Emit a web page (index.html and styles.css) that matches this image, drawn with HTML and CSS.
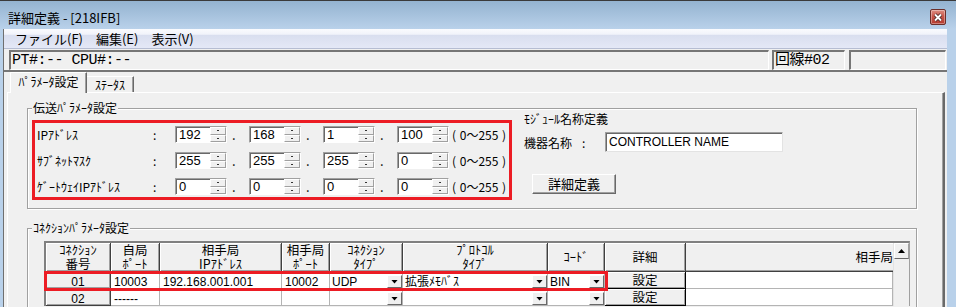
FILE: index.html
```html
<!DOCTYPE html>
<html lang="ja">

<head>
    <meta charset="UTF-8">
    <title>詳細定義 - [218IFB]</title>
    <link rel="stylesheet" href="styles.css">
</head>

<body>
    <div class="titlebar">
        <span class="title">詳細定義 - [218IFB]</span>
        <span class="close-btn">
            <svg width="10" height="9" viewBox="0 0 10 9">
                <path d="M2 1.5 L8 7.5 M8 1.5 L2 7.5" stroke="#4a2a28" stroke-width="3.6" />
                <path d="M2 1.5 L8 7.5 M8 1.5 L2 7.5" stroke="#fff" stroke-width="1.8" />
            </svg>
        </span>
    </div>
    <div class="frame">
        <div class="client">
            <div class="menubar">
                <span class="menu-item">ファイル(F)</span>
                <span class="menu-item">編集(E)</span>
                <span class="menu-item">表示(V)</span>
            </div>
            <div class="status-row">
                <div class="status-panel status-main">PT#:-- CPU#:--</div>
                <div class="status-panel status-line">回線#02</div>
                <div class="status-panel status-empty"></div>
            </div>
            <div class="tab-area">
                <div class="tabs">
                    <div class="tab tab-active">ﾊﾟﾗﾒｰﾀ設定</div>
                    <div class="tab tab-status">ｽﾃｰﾀｽ</div>
                </div>
                <div class="tab-panel">
                    <!-- 伝送パラメータ -->
                    <div class="group group-transfer">
                        <div class="legend">伝送ﾊﾟﾗﾒｰﾀ設定</div>
                        <div class="transfer-body">
                            <div class="ip-box">
                                <div class="ip-row">
                                    <span class="ip-label">IPｱﾄﾞﾚｽ</span>
                                    <span class="ip-colon">:</span>
                                    <div class="spin"><span class="spin-value">192</span><span class="spin-btns"><i></i><i></i></span></div>
                                    <span class="ip-dot">.</span>
                                    <div class="spin"><span class="spin-value">168</span><span class="spin-btns"><i></i><i></i></span></div>
                                    <span class="ip-dot">.</span>
                                    <div class="spin"><span class="spin-value">1</span><span class="spin-btns"><i></i><i></i></span></div>
                                    <span class="ip-dot">.</span>
                                    <div class="spin"><span class="spin-value">100</span><span class="spin-btns"><i></i><i></i></span></div>
                                    <span class="ip-range">( 0～255 )</span>
                                </div>
                                <div class="ip-row">
                                    <span class="ip-label">ｻﾌﾞﾈｯﾄﾏｽｸ</span>
                                    <span class="ip-colon">:</span>
                                    <div class="spin"><span class="spin-value">255</span><span class="spin-btns"><i></i><i></i></span></div>
                                    <span class="ip-dot">.</span>
                                    <div class="spin"><span class="spin-value">255</span><span class="spin-btns"><i></i><i></i></span></div>
                                    <span class="ip-dot">.</span>
                                    <div class="spin"><span class="spin-value">255</span><span class="spin-btns"><i></i><i></i></span></div>
                                    <span class="ip-dot">.</span>
                                    <div class="spin"><span class="spin-value">0</span><span class="spin-btns"><i></i><i></i></span></div>
                                    <span class="ip-range">( 0～255 )</span>
                                </div>
                                <div class="ip-row">
                                    <span class="ip-label">ｹﾞｰﾄｳｪｲIPｱﾄﾞﾚｽ</span>
                                    <span class="ip-colon">:</span>
                                    <div class="spin"><span class="spin-value">0</span><span class="spin-btns"><i></i><i></i></span></div>
                                    <span class="ip-dot">.</span>
                                    <div class="spin"><span class="spin-value">0</span><span class="spin-btns"><i></i><i></i></span></div>
                                    <span class="ip-dot">.</span>
                                    <div class="spin"><span class="spin-value">0</span><span class="spin-btns"><i></i><i></i></span></div>
                                    <span class="ip-dot">.</span>
                                    <div class="spin"><span class="spin-value">0</span><span class="spin-btns"><i></i><i></i></span></div>
                                    <span class="ip-range">( 0～255 )</span>
                                </div>
                            </div>
                            <div class="module">
                                <div class="module-title">ﾓｼﾞｭｰﾙ名称定義</div>
                                <div class="name-row">
                                    <span class="name-label">機器名称<span class="name-colon">:</span></span>
                                    <div class="name-input">CONTROLLER NAME</div>
                                </div>
                                <div class="detail-btn">詳細定義</div>
                            </div>
                        </div>
                    </div>

                    <!-- コネクションパラメータ -->
                    <div class="group group-conn">
                        <div class="legend">ｺﾈｸｼｮﾝﾊﾟﾗﾒｰﾀ設定</div>
                        <div class="conn-table">
                            <div class="grid">
                                <div class="hd">ｺﾈｸｼｮﾝ<br>番号</div>
                                <div class="hd">自局<br>ﾎﾟｰﾄ</div>
                                <div class="hd">相手局<br>IPｱﾄﾞﾚｽ</div>
                                <div class="hd">相手局<br>ﾎﾟｰﾄ</div>
                                <div class="hd">ｺﾈｸｼｮﾝ<br>ﾀｲﾌﾟ</div>
                                <div class="hd">ﾌﾟﾛﾄｺﾙ<br>ﾀｲﾌﾟ</div>
                                <div class="hd">ｺｰﾄﾞ</div>
                                <div class="hd">詳細</div>
                                <div class="hd hd-last">相手局</div>

                                <div class="rn">01</div>
                                <div class="td">10003</div>
                                <div class="td">192.168.001.001</div>
                                <div class="td">10002</div>
                                <div class="td combo"><span>UDP</span><span class="drop"></span></div>
                                <div class="td combo"><span>拡張ﾒﾓﾊﾞｽ</span><span class="drop"></span></div>
                                <div class="td combo"><span>BIN</span><span class="drop"></span></div>
                                <div class="dt">設定</div>
                                <div class="td"></div>

                                <div class="rn">02</div>
                                <div class="td">------</div>
                                <div class="td"></div>
                                <div class="td"></div>
                                <div class="td combo"><span></span><span class="drop"></span></div>
                                <div class="td combo"><span></span><span class="drop"></span></div>
                                <div class="td combo"><span></span><span class="drop"></span></div>
                                <div class="dt">設定</div>
                                <div class="td"></div>
                            </div>
                            <div class="scrollbar">
                                <div class="scroll-up"></div>
                            </div>
                            <div class="row-mark"></div>
                        </div>
                    </div>
                </div>
            </div>
        </div>
    </div>
</body>

</html>
```

FILE: styles.css
```css
* {
    margin: 0;
    padding: 0;
    box-sizing: border-box;
}

body {
    width: 956px;
    height: 307px;
    overflow: hidden;
    background: #b9d1ea;
    border-top: 1px solid #3a3a3a;
    font-family: "Noto Sans CJK JP", sans-serif;
    font-size: 12px;
    color: #000;
}

/* title bar */
.titlebar {
    height: 28px;
    background: linear-gradient(#94b3d0, #b9d1ea);
    display: flex;
    align-items: center;
    justify-content: space-between;
    padding: 4px 10px 0 8px;
}

.title {
    font-size: 13px;
}

.close-btn {
    width: 16px;
    height: 16px;
    border: 1px solid #6b2e29;
    border-radius: 2px;
    background: linear-gradient(#dd8f83, #c9564a 45%, #b43a2e);
    box-shadow: inset 0 0 0 1px rgba(255, 255, 255, 0.35);
    display: flex;
    align-items: center;
    justify-content: center;
}

/* window body */
.frame {
    height: 278px;
    padding: 0 9px 0 3px;
}

.client {
    height: 100%;
    background: #f0f0f0;
    border-left: 1px solid #6f6f6f;
}

.menubar {
    height: 20px;
    background: linear-gradient(#fafbfe, #f1f3fa 28%, #d9deef 32%, #e4e8f6);
    border-bottom: 1px solid #b6bdd2;
    display: flex;
    align-items: center;
    padding-left: 4px;
    font-size: 13px;
}

.menu-item {
    padding: 0 6px 0 7px;
}

.status-row {
    display: flex;
    gap: 3px;
    height: 21px;
    padding: 1px 1px 0 5px;
}

.status-panel {
    height: 20px;
    border-top: 2px solid #767676;
    border-left: 2px solid #767676;
    border-bottom: 1px solid #fff;
    border-right: 1px solid #fff;
    font-family: "Liberation Mono", "Noto Sans CJK JP", monospace;
    font-size: 15px;
    letter-spacing: -0.5px;
    line-height: 17px;
    padding-left: 1px;
    white-space: nowrap;
    overflow: hidden;
}

.status-main {
    flex: 1;
}

.status-line {
    width: 73px;
}

.status-empty {
    width: 97px;
    margin-left: 1px;
}

/* tabs */
.tab-area {
    border-top: 2px solid #767676;
}

.tabs {
    display: flex;
    align-items: flex-end;
    height: 20px;
    padding-left: 6px;
}

.tab {
    height: 16px;
    border-top: 1px solid #fff;
    border-right: 1px solid #696969;
    box-shadow: inset -1px 0 0 #a0a0a0;
    text-align: center;
    line-height: 15px;
}

.tab-active {
    width: 77px;
    height: 21px;
    margin-bottom: -1px;
    border-left: 1px solid #fff;
    background: #f0f0f0;
    line-height: 18px;
}

.tab-status {
    width: 47px;
}

.tab-panel {
    height: 220px;
    margin: 0 2px 0 3px;
    border-top: 1px solid #fff;
    border-left: 1px solid #fff;
    border-right: 2px solid #696969;
    box-shadow: inset -1px 0 0 #a0a0a0;
}

/* group boxes */
.group {
    width: 890px;
    margin-left: 19px;
    border: 1px solid #a0a0a0;
    box-shadow: 1px 1px 0 #fff, inset 1px 1px 0 #fff;
}

.legend {
    width: fit-content;
    margin: -8px 0 0 4px;
    padding: 0 1px;
    background: #f0f0f0;
    line-height: 14px;
}

.group-transfer {
    margin-top: 15px;
    padding-bottom: 8px;
}

.transfer-body {
    display: flex;
    align-items: flex-start;
    padding-left: 4px;
}

.ip-box {
    width: 480px;
    height: 80px;
    margin-top: 5px;
    border: 3px solid #ec1c24;
    padding: 3px 0 0 2px;
    display: flex;
    flex-direction: column;
    gap: 9px;
}

.ip-row {
    display: flex;
    align-items: center;
    height: 17px;
}

.ip-label {
    width: 116px;
}

.ip-colon {
    width: 22px;
}

.ip-dot {
    width: 22px;
    padding-left: 5px;
    font-size: 13px;
}

.ip-range {
    margin-left: 3px;
    word-spacing: 1px;
}

.spin {
    width: 52px;
    height: 17px;
    display: flex;
    background: #fff;
    border: 1px solid;
    border-color: #a0a0a0 #fff #fff #a0a0a0;
    box-shadow: inset 1px 1px 0 #696969;
}

.spin-value {
    flex: 1;
    padding: 1px 0 0 3px;
    font-family: "Liberation Sans", sans-serif;
    font-size: 13px;
    line-height: 14px;
}

.spin-btns {
    width: 16px;
    display: flex;
    flex-direction: column;
}

.spin-btns i {
    flex: 1;
    background: #f0f0f0;
    border: 1px solid;
    border-color: #fff #a0a0a0 #a0a0a0 #fff;
    display: flex;
    align-items: center;
    justify-content: center;
}

.spin-btns i::after {
    content: "";
    width: 2px;
    height: 1px;
    background: #333;
}

.module {
    margin: -4px 0 0 12px;
}

.module-title {
    line-height: 16px;
}

.name-row {
    display: flex;
    align-items: center;
    margin-top: 5px;
}

.name-label {
    width: 81px;
}

.name-colon {
    margin-left: 10px;
}

.name-input {
    width: 178px;
    height: 20px;
    background: #fff;
    border: 1px solid;
    border-color: #a0a0a0 #e3e3e3 #e3e3e3 #a0a0a0;
    box-shadow: inset 1px 1px 0 #696969;
    padding: 1px 0 0 3px;
    font-family: "Liberation Sans", sans-serif;
    font-size: 12px;
    line-height: 17px;
}

.detail-btn {
    width: 84px;
    height: 20px;
    margin: 22px 0 0 8px;
    border: 1px solid;
    border-color: #fff #696969 #696969 #fff;
    box-shadow: inset -1px -1px 0 #a0a0a0;
    text-align: center;
    line-height: 18px;
    font-size: 13px;
}

/* connection table */
.group-conn {
    margin-top: 19px;
    height: 120px;
}

.conn-table {
    position: relative;
    display: flex;
    width: 866px;
    margin: 6px 0 0 16px;
    border-top: 2px solid #808080;
    border-left: 2px solid #808080;
    border-right: 1px solid #a0a0a0;
}

.grid {
    display: grid;
    grid-template-columns: 65px 49px 122px 48px 73px 145px 57px 81px 207px;
    grid-template-rows: 29px 17px 17px;
}

.hd,
.rn {
    background: #f0f0f0;
    border-right: 1px solid #404040;
    border-bottom: 1px solid #404040;
    box-shadow: inset 1px 1px 0 #fff, inset -1px -1px 0 #a0a0a0;
    display: flex;
    align-items: center;
    justify-content: center;
    text-align: center;
    font-size: 12.5px;
    line-height: 14px;
    white-space: nowrap;
}

.hd-last {
    justify-content: flex-end;
    border-right: none;
    box-shadow: inset 0 1px 0 #fff, inset 0 -1px 0 #a0a0a0;
}

.rn {
    align-items: flex-start;
    padding-top: 4px;
    font-size: 12px;
    line-height: 12px;
    font-family: "Liberation Sans", sans-serif;
}

.td {
    background: #fff;
    border-right: 1px solid #b4b4b4;
    border-bottom: 1px solid #b4b4b4;
    padding: 4px 0 0 3px;
    font-family: "Liberation Sans", "Noto Sans CJK JP", sans-serif;
    font-size: 12px;
    line-height: 12px;
    white-space: nowrap;
    overflow: hidden;
}

.combo {
    display: flex;
    justify-content: space-between;
    padding-left: 2px;
}

.drop {
    width: 15px;
    height: 13px;
    margin-top: -1px;
    background: #f0f0f0;
    border: 1px solid;
    border-color: #fff #696969 #696969 #fff;
    display: flex;
    align-items: center;
    justify-content: center;
}

.drop::after {
    content: "";
    width: 7px;
    height: 4px;
    background: #000;
    clip-path: polygon(0 0, 100% 0, 50% 100%);
}

.dt {
    background: #f0f0f0;
    border-right: 1px solid #000;
    border-bottom: 1px solid #000;
    box-shadow: inset 1px 1px 0 #fff, inset -1px -1px 0 #a0a0a0;
    text-align: center;
    padding-top: 1px;
    font-size: 12.5px;
    line-height: 14px;
}

.scrollbar {
    width: 16px;
    background: #f0f0f0;
    border-left: 1px solid #e3e3e3;
}

.scroll-up {
    height: 16px;
    border: 1px solid;
    border-color: #fff #a0a0a0 #696969 #fff;
    display: flex;
    align-items: center;
    justify-content: center;
}

.scroll-up::after {
    content: "";
    width: 7px;
    height: 4px;
    background: #000;
    clip-path: polygon(50% 0, 100% 100%, 0 100%);
}

.row-mark {
    position: absolute;
    left: -2px;
    top: 28px;
    width: 564px;
    height: 20px;
    border: 3px solid #ec1c24;
}
```
